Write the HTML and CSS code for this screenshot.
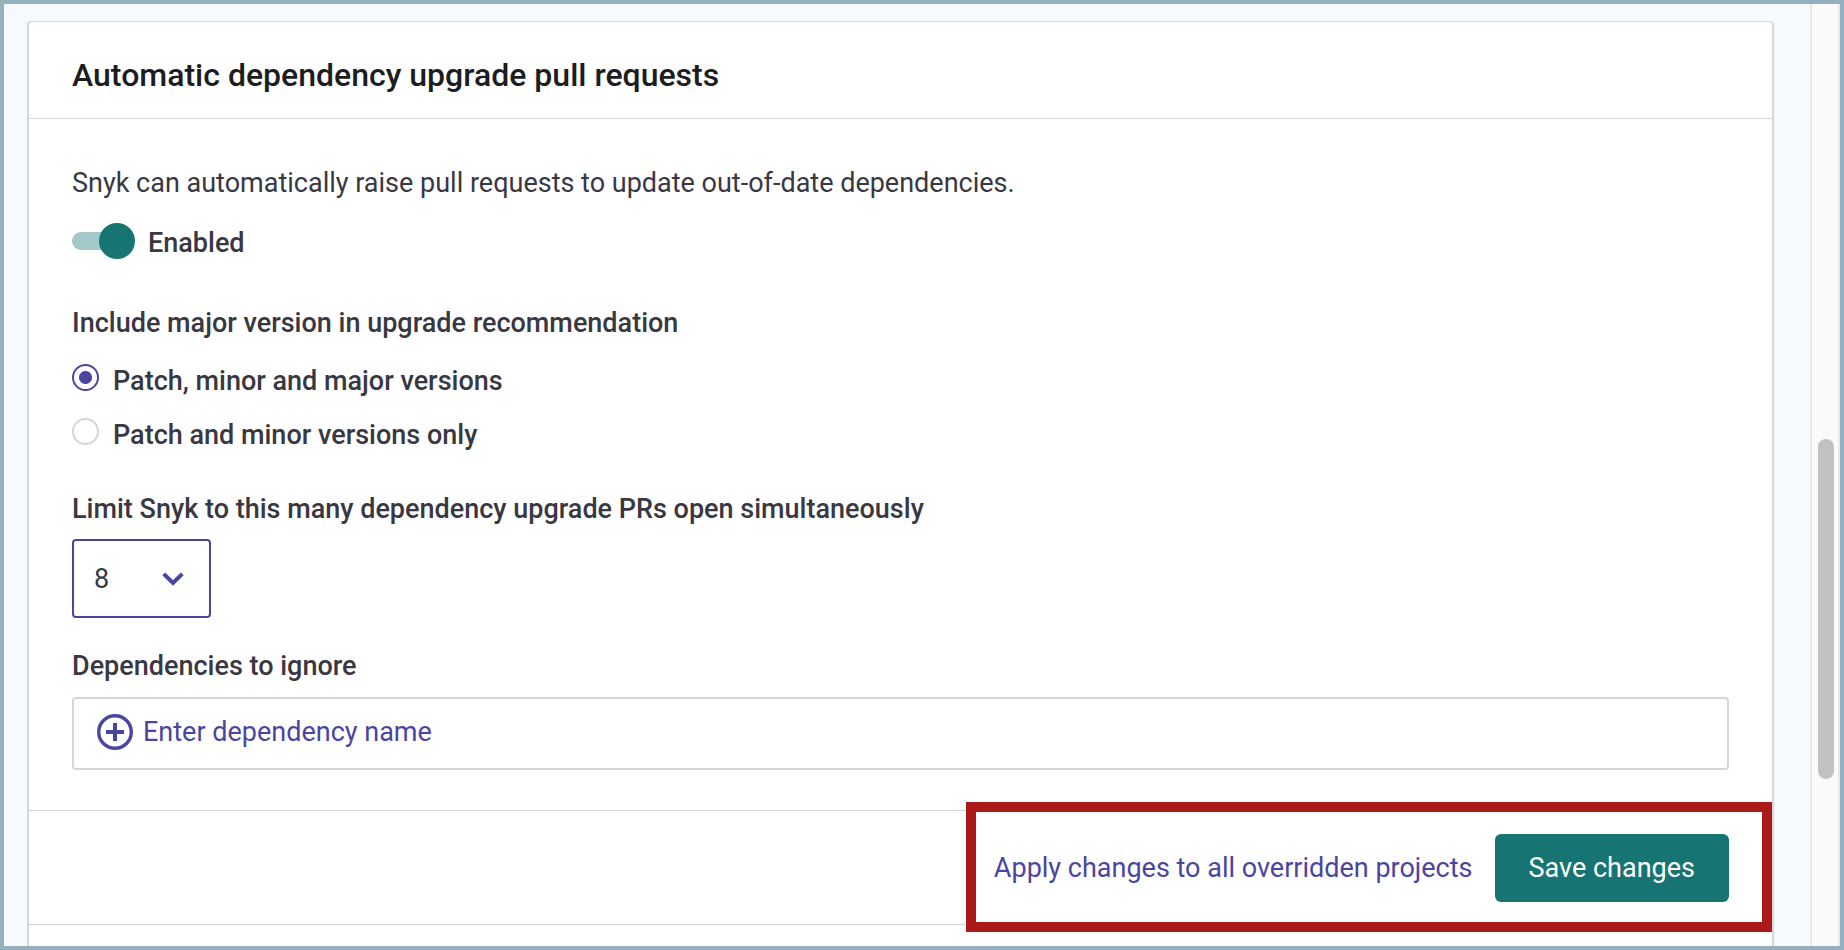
FILE: index.html
```html
<!DOCTYPE html>
<html lang="en">
<head>
<meta charset="utf-8">
<title>Automatic dependency upgrade pull requests</title>
<link rel="stylesheet" href="styles.css">
</head>
<body>
<div class="frame">
  <main class="content">
    <form class="card">
      <header class="card-header">
        <h2 class="card-title">Automatic dependency upgrade pull requests</h2>
      </header>
      <div class="card-body">
        <p class="intro">Snyk can automatically raise pull requests to update out-of-date dependencies.</p>
        <label class="toggle-row">
          <input class="toggle" type="checkbox" role="switch" checked>
          <span>Enabled</span>
        </label>
        <fieldset class="options">
          <legend class="label">Include major version in upgrade recommendation</legend>
          <label class="option"><input class="radio" type="radio" name="versions" checked><span>Patch, minor and major versions</span></label>
          <label class="option"><input class="radio" type="radio" name="versions"><span>Patch and minor versions only</span></label>
        </fieldset>
        <div class="field field-limit">
          <label class="label" for="limit">Limit Snyk to this many dependency upgrade PRs open simultaneously</label>
          <div class="select-wrap">
            <select class="select" id="limit">
              <option>1</option><option>2</option><option>3</option><option>4</option><option>5</option>
              <option>6</option><option>7</option><option selected>8</option><option>9</option><option>10</option>
            </select>
            <svg class="chevron" viewBox="0 0 22 14" aria-hidden="true"><path d="M1.7 1.8 11 11 20.3 1.8" fill="none" stroke="currentColor" stroke-width="4"/></svg>
          </div>
        </div>
        <div class="field">
          <label class="label" for="ignore">Dependencies to ignore</label>
          <div class="input-wrap">
            <svg class="plus" viewBox="0 0 36 36" aria-hidden="true"><circle cx="18" cy="18" r="16.3" fill="none" stroke="currentColor" stroke-width="3.4"/><path d="M18 9v18M9 18h18" fill="none" stroke="currentColor" stroke-width="4"/></svg>
            <input class="input" id="ignore" type="text" placeholder="Enter dependency name">
          </div>
        </div>
      </div>
      <footer class="card-footer">
        <div class="actions">
          <a class="link" href="#apply">Apply changes to all overridden projects</a>
          <button class="button" type="submit">Save changes</button>
        </div>
      </footer>
      <div class="card-next"></div>
    </form>
  </main>
  <div class="scroll-track" aria-hidden="true"><div class="scroll-thumb"></div></div>
</div>
</body>
</html>
```
FILE: styles.css
```css
* { box-sizing: border-box; }

body {
  margin: 0;
  font-family: Roboto, "Liberation Sans", sans-serif;
  font-size: 27px;
  line-height: 40px;
  color: #393842;
}

.frame {
  display: flex;
  min-height: 100vh;
  border: 4px solid #94b0be;
  background: #f6fafd;
}

.content {
  flex: 1;
  display: flex;
  padding: 17px 36px 0 23px;
}

.card {
  flex: 1;
  display: flex;
  flex-direction: column;
  border: 2px solid #d6d5dc;
  border-top-width: 1px;
  border-bottom: 0;
  border-radius: 4px 4px 0 0;
  background: #fff;
}

.card-header {
  padding: 33px 43px 23px;
  border-bottom: 1px solid #d3d3da;
}

.card-title {
  margin: 0;
  font-size: 32px;
  font-weight: 500;
  color: #1c1c21;
}

.card-body { padding: 44px 43px 40px; }

.intro { margin: 0 0 20px; }

.toggle-row {
  display: flex;
  gap: 13px;
  width: fit-content;
  font-weight: 500;
}

.toggle {
  appearance: none;
  flex: none;
  display: flex;
  align-items: center;
  width: 63px;
  height: 36px;
  margin: 0;
}

/* Knob drawn over the end of the track */
.toggle::before {
  content: "";
  width: 45px;
  height: 18px;
  margin-right: -18px;
  border-radius: 9px;
  background: #a2c8c8;
}

.toggle::after {
  content: "";
  width: 36px;
  height: 36px;
  border-radius: 50%;
  background: #167573;
}

.toggle:not(:checked) { flex-direction: row-reverse; filter: grayscale(1); }

.options {
  min-width: 0;
  margin: 40px 0 34px;
  padding: 0;
  border: 0;
}

.label {
  display: block;
  padding: 0;
  font-weight: 500;
}

.options .label { margin-bottom: 18px; }

.option {
  display: flex;
  gap: 14px;
  width: fit-content;
  font-weight: 500;
}

.option + .option { margin-top: 14px; }

.radio {
  appearance: none;
  flex: none;
  width: 27px;
  height: 27px;
  margin: 3px 0 0;
  border: 2px solid #d6d5dc;
  border-radius: 50%;
  background: #fff;
}

.radio:checked {
  border-color: #4b45a1;
  background: radial-gradient(circle, #4b45a1 6px, #fff 7px);
}

.field {
  display: flex;
  flex-direction: column;
  gap: 11px;
}

.field-limit {
  gap: 10px;
  margin-bottom: 28px;
}

.select-wrap {
  display: grid;
  align-items: center;
  width: 139px;
}

.select,
.chevron { grid-area: 1 / 1; }

.select {
  appearance: none;
  width: 100%;
  height: 79px;
  padding: 0 20px;
  border: 2px solid #4b45a1;
  border-radius: 4px;
  background: #fff;
  color: inherit;
  font: inherit;
}

.chevron {
  justify-self: end;
  width: 22px;
  height: 14px;
  margin-right: 27px;
  color: #4b45a1;
  pointer-events: none;
}

.input-wrap {
  display: flex;
  align-items: center;
  gap: 10px;
  height: 73px;
  padding: 0 23px 3px;
  border: 2px solid #d6d5dc;
  border-radius: 4px;
  color: #4b45a1;
}

.plus {
  flex: none;
  width: 36px;
  height: 36px;
}

.input {
  flex: 1;
  min-width: 0;
  padding: 0;
  border: 0;
  outline: 0;
  background: none;
  color: inherit;
  font: inherit;
}

.input::placeholder { color: #4b45a1; opacity: 1; }

.card-footer {
  display: flex;
  justify-content: flex-end;
  border-top: 1px solid #d3d3da;
}

.actions {
  position: relative;
  display: flex;
  align-items: center;
  gap: 22px;
  padding: 23px 43px 22px 28px;
}

/* Highlight box around the footer actions */
.actions::after {
  content: "";
  position: absolute;
  inset: -9px 0 -8px;
  border: 10px solid #ab1919;
  pointer-events: none;
}

.link {
  color: #4b45a1;
  text-decoration: none;
}

.button {
  height: 68px;
  padding: 0 34px;
  border: 0;
  border-radius: 6px;
  background: #167573;
  color: #fff;
  font: inherit;
}

.card-next {
  flex: 1;
  border-top: 1px solid #d3d3da;
}

.scroll-track {
  display: grid;
  grid-template-rows: 435fr 340fr 167fr;
  width: 30px;
  padding: 0 4px 0 6px;
  border: solid #e8e8e8;
  border-width: 0 2px;
  background: #fafafa;
}

.scroll-thumb {
  grid-row: 2;
  width: 16px;
  border-radius: 8px;
  background: #c1c1c1;
}
```
